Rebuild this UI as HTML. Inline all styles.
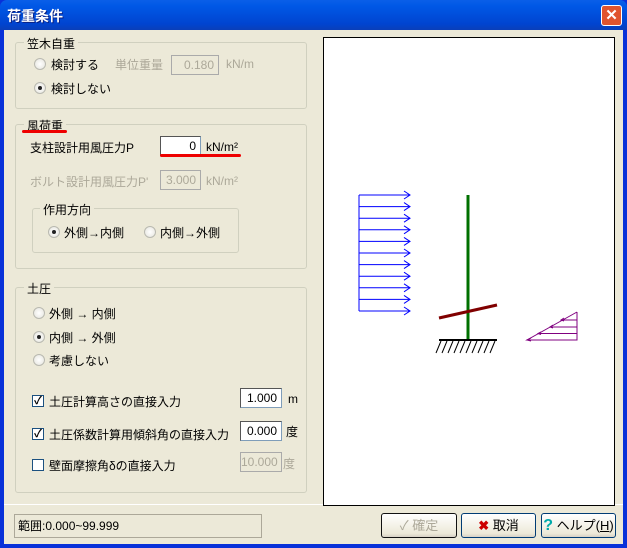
<!DOCTYPE html>
<html><head><meta charset="utf-8"><style>
*{margin:0;padding:0;box-sizing:border-box}
body{width:627px;height:548px;overflow:hidden;background:#0831d9;font-family:"Liberation Sans","Noto Sans CJK JP",sans-serif;font-size:12px;color:#000;position:relative}
.a{position:absolute;white-space:nowrap}
#title{left:0;top:0;width:627px;height:30px;background:linear-gradient(#0a5fe8,#0058e6 20%,#0044d0 80%,#0a3fb8);border-radius:7px 7px 0 0}
#body{left:4px;top:30px;width:619px;height:514px;background:#ece9d8}
.g{position:absolute;border:1px solid #d0d0bf;border-radius:3px}
.gl{position:absolute;background:#ece9d8;padding:0 3px;font-size:12px}
.rb{position:absolute;width:12px;height:12px;border-radius:50%;border:1px solid #b9b9b0;background:radial-gradient(#fff,#e4e3dc)}
.rb.on::after{content:"";position:absolute;left:3px;top:3px;width:4px;height:4px;border-radius:50%;background:#222}
.cb{position:absolute;width:12px;height:12px;border:1px solid #1c5180;background:#fff;font-size:11px;line-height:10px;text-align:center;font-weight:bold}
.tb{position:absolute;height:20px;border:1px solid #7f9db9;border-top-color:#555;border-left-color:#555;background:#fff;text-align:right;padding-right:4px;line-height:18px;font-size:12px}
.dis{color:#aca899}
.tb.dis{background:#ece9d8;border-color:#aaa}
.btn{position:absolute;height:25px;border:1px solid #003c74;border-radius:3px;background:linear-gradient(#fff,#ece9d8 85%,#d6d0c5);text-align:center;line-height:23px;font-size:13px}
</style></head><body>
<div class="a" id="title"></div>
<div class="a" style="left:7px;top:6px;color:#fff;font-weight:bold;font-size:14px;text-shadow:1px 1px #0a1f80">荷重条件</div>
<div class="a" style="left:601px;top:5px;width:21px;height:21px;border:1px solid #fff;border-radius:3px;background:#e0542e;color:#fff;text-align:center;font-weight:bold;line-height:19px;font-size:15px">✕</div>
<div class="a" id="body"></div>

<div class="g" style="left:15px;top:42px;width:292px;height:67px"></div>
<div class="gl" style="left:24px;top:35px">笠木自重</div>
<div class="rb" style="left:34px;top:58px"></div><div class="a" style="left:51px;top:56px">検討する</div>
<div class="a dis" style="left:115px;top:56px">単位重量</div>
<div class="tb dis" style="left:171px;top:55px;width:48px">0.180</div>
<div class="a dis" style="left:226px;top:57px">kN/m</div>
<div class="rb on" style="left:34px;top:82px"></div><div class="a" style="left:51px;top:80px">検討しない</div>

<div class="g" style="left:15px;top:124px;width:292px;height:145px"></div>
<div class="gl" style="left:24px;top:117px">風荷重</div>
<div class="a" style="left:22px;top:130px;width:45px;height:3px;background:#e00;border-radius:2px"></div>
<div class="a" style="left:30px;top:139px">支柱設計用風圧力P</div>
<div class="tb" style="left:160px;top:136px;width:41px">0</div>
<div class="a" style="left:206px;top:140px">kN/m²</div>
<div class="a" style="left:160px;top:154px;width:81px;height:3px;background:#e00;border-radius:2px"></div>
<div class="a dis" style="left:30px;top:173px">ボルト設計用風圧力P'</div>
<div class="tb dis" style="left:160px;top:170px;width:41px">3.000</div>
<div class="a dis" style="left:206px;top:174px">kN/m²</div>
<div class="g" style="left:32px;top:208px;width:207px;height:45px"></div>
<div class="gl" style="left:40px;top:201px">作用方向</div>
<div class="rb on" style="left:48px;top:226px"></div><div class="a" style="left:64px;top:224px">外側→内側</div>
<div class="rb" style="left:144px;top:226px"></div><div class="a" style="left:160px;top:224px">内側→外側</div>

<div class="g" style="left:15px;top:287px;width:292px;height:206px"></div>
<div class="gl" style="left:24px;top:280px">土圧</div>
<div class="rb" style="left:33px;top:307px"></div><div class="a" style="left:49px;top:305px">外側 → 内側</div>
<div class="rb on" style="left:33px;top:331px"></div><div class="a" style="left:49px;top:329px">内側 → 外側</div>
<div class="rb" style="left:33px;top:354px"></div><div class="a" style="left:49px;top:352px">考慮しない</div>
<div class="cb" style="left:32px;top:395px">✓</div><div class="a" style="left:49px;top:393px">土圧計算高さの直接入力</div>
<div class="tb" style="left:240px;top:388px;width:42px">1.000</div><div class="a" style="left:288px;top:392px">m</div>
<div class="cb" style="left:32px;top:428px">✓</div><div class="a" style="left:49px;top:426px">土圧係数計算用傾斜角の直接入力</div>
<div class="tb" style="left:240px;top:421px;width:42px">0.000</div><div class="a" style="left:286px;top:423px">度</div>
<div class="cb" style="left:32px;top:459px;border-color:#1c5180"></div><div class="a" style="left:49px;top:457px">壁面摩擦角δの直接入力</div>
<div class="tb dis" style="left:240px;top:452px;width:42px">10.000</div><div class="a dis" style="left:283px;top:455px">度</div>

<div class="a" style="left:4px;top:504px;width:619px;height:1px;background:#fff"></div>
<div class="a" style="left:14px;top:514px;width:248px;height:24px;border:1px solid #aca899;line-height:22px;padding-left:3px;font-size:12px">範囲:0.000~99.999</div>

<div class="btn dis" style="left:381px;top:513px;width:76px;border-color:#111">✓ 確定</div>
<div class="btn" style="left:461px;top:513px;width:75px"><span style="color:#c00;font-weight:bold">✖</span> 取消</div>
<div class="btn" style="left:541px;top:513px;width:75px"><span style="color:#0aa;font-weight:bold;font-size:16px">?</span> ヘルプ(<u>H</u>)</div>

<svg class="a" style="left:323px;top:37px" width="292" height="469" viewBox="323 37 292 469">
<rect x="323.5" y="37.5" width="291" height="468" fill="#fff" stroke="#000"/>
<g stroke="#0000ff" stroke-width="1" fill="none">
<line x1="359" y1="195" x2="359" y2="311"/>
<path d="M359 195H410M359 206.6H410M359 218.2H410M359 229.8H410M359 241.4H410M359 253H410M359 264.6H410M359 276.2H410M359 287.8H410M359 299.4H410M359 311H410"/>
<path d="M404 191l6 4-6 4M404 202.6l6 4-6 4M404 214.2l6 4-6 4M404 225.8l6 4-6 4M404 237.4l6 4-6 4M404 249l6 4-6 4M404 260.6l6 4-6 4M404 272.2l6 4-6 4M404 283.8l6 4-6 4M404 295.4l6 4-6 4M404 307l6 4-6 4"/>
</g>
<line x1="468" y1="195" x2="468" y2="340" stroke="#007000" stroke-width="3"/>
<line x1="439" y1="318" x2="497" y2="305" stroke="#800000" stroke-width="3"/>
<line x1="439" y1="340" x2="497" y2="340" stroke="#000" stroke-width="2"/>
<path d="M441 341l-5 12M447 341l-5 12M453 341l-5 12M459 341l-5 12M465 341l-5 12M471 341l-5 12M477 341l-5 12M483 341l-5 12M489 341l-5 12M495 341l-5 12" stroke="#000"/>
<g stroke="#800080" fill="none">
<path d="M577 312V340H527L577 312M550 327H577M538 333.5H577M561 320H577"/>
<path d="M531 338l-4 2 4 1M553 325l-3 2 3 1M541 332l-3 1.5 3 1M564 318l-3 2 3 1"/>
</g>
</svg>
</body></html>
